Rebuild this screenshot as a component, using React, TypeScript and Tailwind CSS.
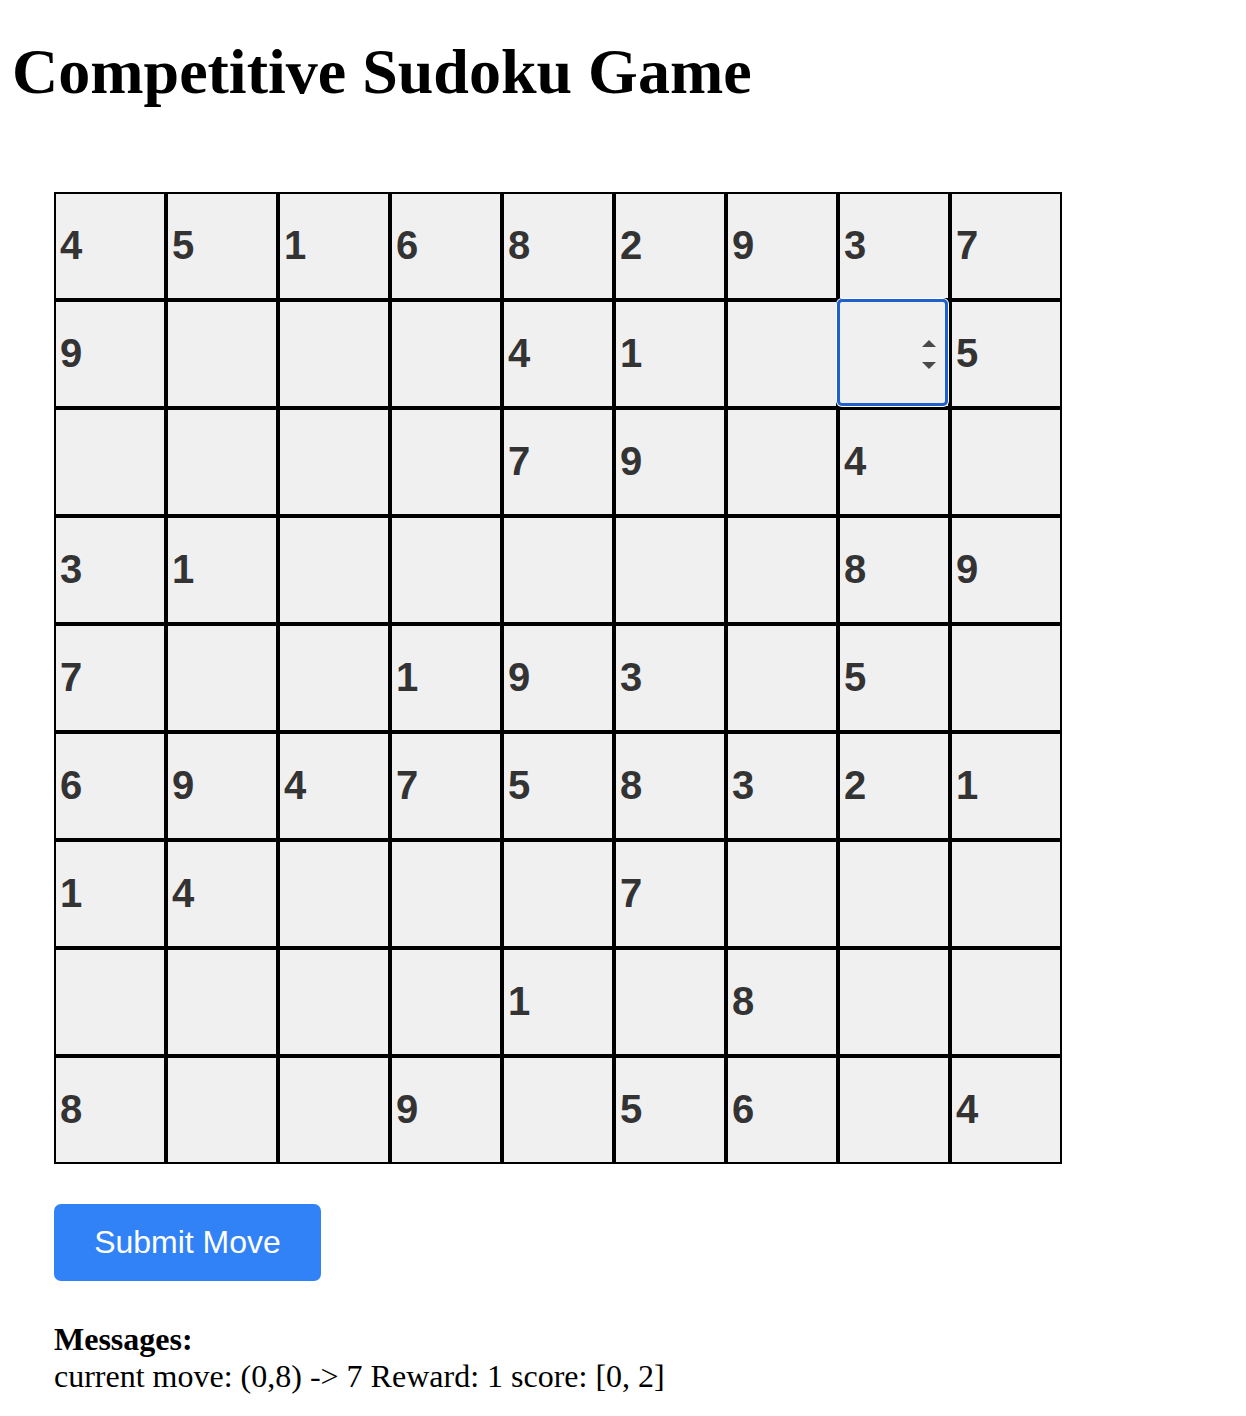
import React from "react";

const board: (number | null)[][] = [
  [4, 5, 1, 6, 8, 2, 9, 3, 7],
  [9, null, null, null, 4, 1, null, null, 5],
  [null, null, null, null, 7, 9, null, 4, null],
  [3, 1, null, null, null, null, null, 8, 9],
  [7, null, null, 1, 9, 3, null, 5, null],
  [6, 9, 4, 7, 5, 8, 3, 2, 1],
  [1, 4, null, null, null, 7, null, null, null],
  [null, null, null, null, 1, null, 8, null, null],
  [8, null, null, 9, null, 5, 6, null, 4],
];

function Cell({ value, focused }: { value: number | null; focused: boolean }) {
  return (
    <div className="relative w-[108px] h-[104px] bg-[#f0f0f0] flex items-center pl-[4px] pb-[2px]">
      <span className="font-['Liberation_Sans',Arial,sans-serif] font-bold text-[40px] leading-[46px] text-[#333333]">
        {value ?? ""}
      </span>
      {focused && (
        <>
          <div className="absolute z-10 -left-[3px] -top-[3px] w-[111px] h-[107px] rounded-[5px] bg-[#f0f0f0] shadow-[inset_0_0_0_3px_#1f60cc,0_0_0_1px_#ffffff]" />
          <svg
            className="absolute z-20 left-[82px] top-[38px]"
            width="14"
            height="29"
            viewBox="0 0 14 29"
          >
            <polygon points="0,7 7,0 14,7" fill="#4a4a4a" />
            <polygon points="0,22 14,22 7,29" fill="#4a4a4a" />
          </svg>
        </>
      )}
    </div>
  );
}

export default function App() {
  return (
    <div className="min-h-[1416px] bg-white text-black">
      <h1 className="pt-[35px] mb-0 ml-[12px] font-['Liberation_Serif','Times_New_Roman',serif] font-bold text-[64px] leading-[74px]">
        Competitive Sudoku Game
      </h1>
      <div className="pl-[54px]">
        <div className="mt-[83px] inline-grid grid-cols-[repeat(9,108px)] gap-[4px] bg-black border-2 border-black">
          {board.map((row, r) =>
            row.map((v, c) => (
              <Cell key={`${r}-${c}`} value={v} focused={r === 1 && c === 7} />
            ))
          )}
        </div>
        <div>
          <button className="mt-[40px] w-[267px] h-[77px] rounded-[7px] bg-[#3182f6] text-white font-['Liberation_Sans',Arial,sans-serif] text-[32px] leading-[37px]">
            Submit Move
          </button>
        </div>
        <div className="mt-[40px] font-['Liberation_Serif','Times_New_Roman',serif] text-[32px] leading-[37px]">
          <div className="font-bold">Messages:</div>
          <div>current move: (0,8) -&gt; 7 Reward: 1 score: [0, 2]</div>
        </div>
      </div>
    </div>
  );
}
